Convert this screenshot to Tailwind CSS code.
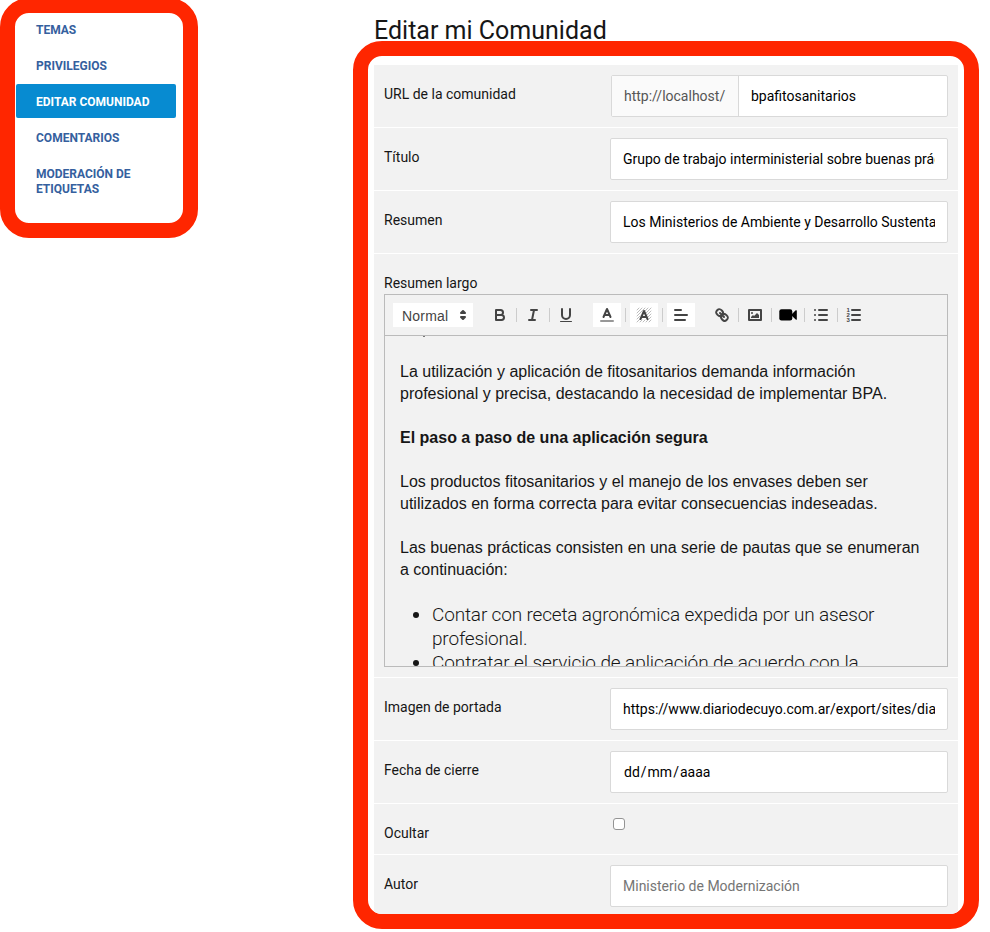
<!DOCTYPE html>
<html lang="es">
<head>
<meta charset="utf-8">
<title>Editar mi Comunidad</title>
<script src="https://cdn.jsdelivr.net/npm/@tailwindcss/browser@4"></script>
</head>
<body class="bg-white w-[990px] h-[932px] overflow-hidden font-['Roboto',sans-serif] text-[#161616] text-[14px]">
<div class="flex items-start">
  <aside class="-mt-[2px] w-[198px] h-[240px] shrink-0 rounded-[29px] border-[15px] border-[#ff2600]">
    <nav class="flex flex-col gap-[2px] w-[161px] pl-px text-[12px] leading-[15px] font-bold text-[#35609e]">
      <a class="h-[33px] pl-5 pt-[10px]"><span>TEMAS</span></a>
      <a class="h-[34px] pl-5 pt-[11px]"><span>PRIVILEGIOS</span></a>
      <a class="h-[34px] pl-5 pt-[11px] bg-[#078bd1] text-white rounded-[2px]"><span>EDITAR COMUNIDAD</span></a>
      <a class="h-[34px] pl-5 pt-[11px]"><span>COMENTARIOS</span></a>
      <a class="h-[49px] pl-5 pt-[11px]"><span>MODERACIÓN DE<br>ETIQUETAS</span></a>
    </nav>
  </aside>
  <main class="ml-[155px] w-[626px]">
    <h1 class="h-[41px] pl-[21px] pt-[16px] text-[25px] leading-[30px] whitespace-nowrap">Editar mi Comunidad</h1>
    <section class="h-[888px] rounded-[29px] border-[15px] border-[#ff2600] pt-[9px] px-[6px] overflow-hidden">
      <form class="flex flex-col gap-px w-[584px]">
        <div class="flex h-[62px] bg-[#f2f2f2] pl-[10px] pt-[10px]">
          <label class="w-[227px] pt-[9px] leading-5">URL de la comunidad</label>
          <div class="flex w-[337px] h-[42px] rounded-[2px] border border-[#d9d9d9] bg-white text-black leading-10">
            <span class="w-[127px] border-r border-[#d9d9d9] bg-[#fafafa] text-[#555] pl-3">http://localhost/</span>
            <span class="pl-3">bpafitosanitarios</span>
          </div>
        </div>
        <div class="flex h-[62px] bg-[#f2f2f2] pl-[10px] pt-[10px]">
          <label class="w-[226px] pt-[9px] leading-5">Título</label>
          <div class="w-[338px] h-[42px] rounded-[2px] border border-[#d9d9d9] bg-white px-3 text-black leading-10"><div class="overflow-hidden whitespace-nowrap">Grupo de trabajo interministerial sobre buenas prác</div></div>
        </div>
        <div class="flex h-[62px] bg-[#f2f2f2] pl-[10px] pt-[10px]">
          <label class="w-[226px] pt-[9px] leading-5">Resumen</label>
          <div class="w-[338px] h-[42px] rounded-[2px] border border-[#d9d9d9] bg-white px-3 text-black leading-10"><div class="overflow-hidden whitespace-nowrap">Los Ministerios de Ambiente y Desarrollo Sustenta</div></div>
        </div>
        <div class="h-[423px] bg-[#f2f2f2] px-[10px] pt-[19px]">
          <label class="block h-[21px] leading-5">Resumen largo</label>
          <div class="w-[564px] h-[373px] border border-[#bbb] font-['Liberation_Sans',Arial,sans-serif] flex flex-col">
            <div class="flex h-[41px] shrink-0 items-center border-b border-[#bbb] pl-2 text-[#444]">
              <div class="flex w-20 h-6 bg-white items-center pl-[9px] pt-[2px] text-[14px]"><span class="w-[52px] tracking-[0.2px]">Normal</span>
                <svg class="size-[18px] -mt-[2px]" viewBox="0 0 18 18" fill="none" stroke="#444" stroke-width="2" stroke-linejoin="round"><path d="M7 11 9 13 11 11ZM7 7 9 5 11 7Z"/></svg>
              </div>
              <div class="flex ml-[10px]">
                <span class="flex w-[33px] h-[14px] items-center justify-center border-l border-transparent"><svg class="size-[18px] shrink-0" viewBox="0 0 18 18" fill="none" stroke="#444" stroke-width="2"><path d="M5 4H9.5A2.5 2.5 0 0 1 9.5 9H5ZM5 9H10.5A2.5 2.5 0 0 1 10.5 14H5Z" stroke-linejoin="round"/></svg></span>
                <span class="flex w-[33px] h-[14px] items-center justify-center border-l border-[#ccc]"><svg class="size-[18px] shrink-0" viewBox="0 0 18 18" fill="none" stroke="#444" stroke-width="2" stroke-linecap="round"><path d="M7 4H13M5 14H11M8 14 10 4"/></svg></span>
                <span class="flex w-[33px] h-[14px] items-center justify-center border-l border-[#ccc]"><svg class="size-[18px] shrink-0" viewBox="0 0 18 18" fill="none" stroke="#444" stroke-width="2" stroke-linecap="round"><path d="M5 3V9A4 4 0 0 0 13 9V3"/><rect x="3" y="15" width="12" height="1" rx=".5" fill="#444" stroke="none"/></svg></span>
              </div>
              <div class="flex items-center ml-[11px]">
                <span class="flex w-7 h-6 bg-white items-center justify-center"><svg class="size-[18px]" viewBox="0 0 18 18" fill="none" stroke="#444" stroke-width="2" stroke-linecap="round" stroke-linejoin="round"><path d="M3 15H15" opacity=".55"/><path d="M5.5 11 9 3 12.5 11M11.63 9H6.38"/></svg></span>
                <span class="w-px h-[14px] bg-[#ccc] mx-1"></span>
                <span class="flex w-7 h-6 bg-white items-center justify-center"><svg class="size-[18px]" viewBox="0 0 18 18" fill="none" stroke="#444" stroke-linecap="round" stroke-linejoin="round"><path stroke-width=".6" opacity=".6" d="M2 4 4 2M2 7 7 2M2 10 10 2M2 13 5 10M10 5 13 2M2 16 6 12M11 7 16 2M5 16 7 14M12 9 16 5M8 16 10 14M13 11 16 8M11 16 16 11M14 16 16 14"/><path stroke-width="2" d="M5.5 13 9 5 12.5 13M11.63 11H6.38"/></svg></span>
                <span class="w-px h-[14px] bg-[#ccc] mx-1"></span>
                <span class="flex w-7 h-6 bg-white items-center justify-center"><svg class="size-[18px]" viewBox="0 0 18 18" fill="none" stroke="#444" stroke-width="2" stroke-linecap="round"><path d="M3 9H15M3 14H13M3 4H9"/></svg></span>
              </div>
              <div class="flex ml-[10px]">
                <span class="flex w-[33px] h-[14px] items-center justify-center border-l border-transparent"><svg class="size-[18px] shrink-0" viewBox="0 0 18 18" fill="none" stroke="#444" stroke-width="2" stroke-linecap="round" stroke-linejoin="round"><path d="M7 7 11 11M8.9 4.577a3.476 3.476 0 0 1 .36 4.679A3.476 3.476 0 0 1 4.577 8.9C3.185 7.5 2.035 6.4 4.217 4.217S7.5 3.185 8.9 4.577ZM13.423 9.1a3.476 3.476 0 0 0-4.679-.36 3.476 3.476 0 0 0 .36 4.679c1.392 1.392 2.5 2.542 4.679.36S14.815 10.5 13.423 9.1Z"/></svg></span>
                <span class="flex w-[33px] h-[14px] items-center justify-center border-l border-[#ccc]"><svg class="size-[18px] shrink-0" viewBox="0 0 18 18" fill="none" stroke="#444" stroke-width="2" stroke-linejoin="round"><rect x="3" y="4" width="12" height="10"/><g fill="#444" stroke="none"><circle cx="6" cy="7" r="1"/><path d="M5 12V11L7 9 8 10 11 7 13 9V12Z"/></g></svg></span>
                <span class="flex w-[33px] h-[14px] items-center justify-center border-l border-[#ccc]"><svg class="size-[18px] shrink-0" viewBox="0 0 18 18" fill="#000"><rect x=".3" y="3.3" width="13" height="11.2" rx="2.2"/><path d="M12 9 16.7 4.3Q17.8 3.8 17.8 4.8V13.2Q17.8 14.2 16.7 13.5Z"/></svg></span>
                <span class="flex w-[33px] h-[14px] items-center justify-center border-l border-[#ccc]"><svg class="size-[18px] shrink-0" viewBox="0 0 18 18" fill="none" stroke="#444" stroke-width="2" stroke-linecap="round"><path d="M7 4H15M7 9H15M7 14H15"/><path d="M2 4H4M2 9H4M2 14H4" stroke-width="1.6" stroke-linecap="butt"/></svg></span>
                <span class="flex w-[33px] h-[14px] items-center justify-center border-l border-[#ccc]"><svg class="size-[18px] shrink-0" viewBox="0 0 18 18" fill="#444"><path d="M7 4H15M7 9H15M7 14H15" stroke="#444" stroke-width="2" stroke-linecap="round"/><g font-family="Liberation Sans" font-weight="bold" font-size="6"><text x="1.6" y="6">1</text><text x="1.6" y="11.1">2</text><text x="1.6" y="16.2">3</text></g></svg></span>
              </div>
            </div>
            <div class="grow overflow-hidden pl-[15px] text-[16px] leading-[22px] whitespace-nowrap">
              <div class="ml-[23px] w-[2px] h-px bg-[#777]"></div>
              <p class="pt-[24px]"><span>La utilización y aplicación de fitosanitarios demanda información</span><br><span>profesional y precisa, destacando la necesidad de implementar BPA.</span></p>
              <p class="mt-[22px] font-bold">El paso a paso de una aplicación segura</p>
              <p class="mt-[22px]">Los productos fitosanitarios y el manejo de los envases deben ser<br>utilizados en forma correcta para evitar consecuencias indeseadas.</p>
              <p class="mt-[22px]">Las buenas prácticas consisten en una serie de pautas que se enumeran<br>a continuación:</p>
              <ul class="mt-[22px] list-disc pl-8 font-['Roboto',sans-serif] font-light text-[19px] leading-[24px] tracking-[-0.17px]">
                <li>Contar con receta agronómica expedida por un asesor<br>profesional.</li>
                <li class="tracking-[-0.1px]">Contratar el servicio de aplicación de acuerdo con la</li>
              </ul>
            </div>
          </div>
        </div>
        <div class="flex h-[62px] bg-[#f2f2f2] pl-[10px] pt-[10px]">
          <label class="w-[226px] pt-[9px] leading-5">Imagen de portada</label>
          <div class="w-[338px] h-[42px] rounded-[2px] border border-[#d9d9d9] bg-white px-3 text-black leading-10"><div class="overflow-hidden whitespace-nowrap">https://www.diariodecuyo.com.ar/export/sites/dia</div></div>
        </div>
        <div class="flex h-[62px] bg-[#f2f2f2] pl-[10px] pt-[10px]">
          <label class="w-[226px] pt-[9px] leading-5">Fecha de cierre</label>
          <div class="w-[338px] h-[42px] rounded-[2px] border border-[#d9d9d9] bg-white px-[13px] text-black leading-10">dd<span class="px-px">/</span>mm<span class="px-px">/</span>aaaa</div>
        </div>
        <div class="flex h-[50px] bg-[#f2f2f2] pl-[10px]">
          <label class="w-[226px] pt-[19px] leading-5">Ocultar</label>
          <span class="mt-[14px] ml-[3px] size-3 rounded-[3px] border border-[#949494] bg-white"></span>
        </div>
        <div class="flex h-[62px] bg-[#f2f2f2] pl-[10px] pt-[10px]">
          <label class="w-[226px] pt-[9px] leading-5">Autor</label>
          <div class="w-[338px] h-[42px] rounded-[2px] border border-[#d9d9d9] bg-white px-3 text-[#757575] leading-10">Ministerio de Modernización</div>
        </div>
      </form>
    </section>
  </main>
</div>
</body>
</html>
